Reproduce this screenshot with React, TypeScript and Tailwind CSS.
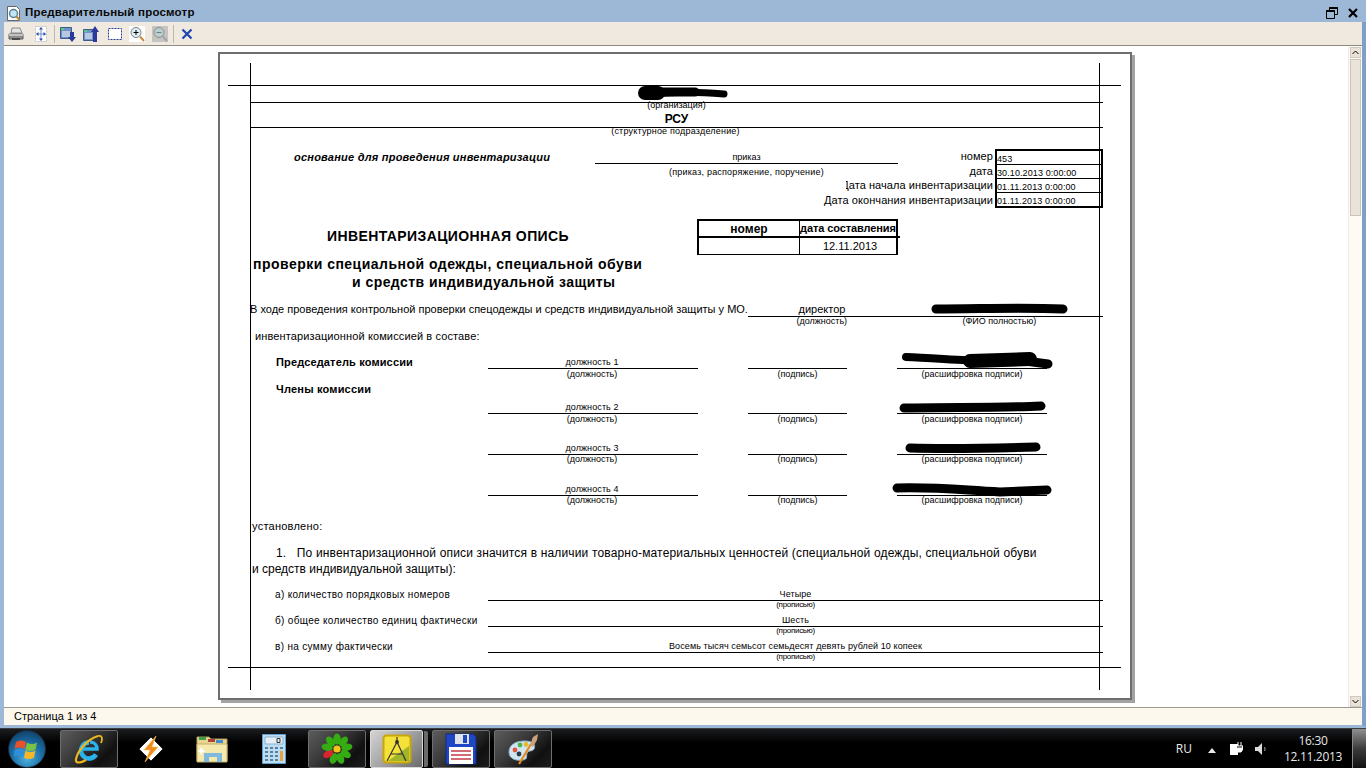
import type { ReactNode } from "react";

function Txt({ className, children }: { className?: string; children: ReactNode }) {
  return <div className={"whitespace-nowrap leading-[12px] " + (className ?? "")}>{children}</div>;
}

// hand-drawn redaction marks over the names
function Scribbles() {
  return (
    <svg className="absolute left-0 top-0 h-[644px] w-[910px]" viewBox="220 54 910 644" fill="none" stroke="#000" strokeLinecap="round">
      <path d="M645 93 L658 93" strokeWidth="14" />
      <path d="M660 92 L695 92" strokeWidth="9" />
      <path d="M655 94 C680 91 700 92 724 94" strokeWidth="7" />
      <path d="M936 309 C980 309 1020 307 1063 309" strokeWidth="9" />
      <path d="M906 357 C930 358 960 360 985 361" strokeWidth="8" />
      <path d="M970 361 L1030 359" strokeWidth="14" />
      <path d="M1025 361 L1048 364" strokeWidth="9" />
      <path d="M904 408 C950 407 1000 408 1041 406" strokeWidth="9" />
      <path d="M910 448 C950 449 1000 448 1036 447" strokeWidth="9" />
      <path d="M897 488 C940 487 960 490 1000 492 L1047 490" strokeWidth="9" />
    </svg>
  );
}

function SignRow({ title, value, capClass, className }: { title?: string; value: string; capClass: string; className?: string }) {
  return (
    <div className={"flex " + (className ?? "")}>
      <div className="w-[238px] pl-[26px]">
        {title && <Txt className="text-[11px] font-bold tracking-[0.15px]">{title}</Txt>}
      </div>
      <div className="w-[210px] pr-[2px] text-center text-[9px]">
        <Txt className="-mr-[2px] h-[13px] border-b border-black pr-[2px] tracking-[0.1px]">{value}</Txt>
        <Txt className={capClass}>(должность)</Txt>
      </div>
      <div className="ml-[50px] w-[99px] text-center text-[9px]">
        <div className="h-[13px] border-b border-black" />
        <Txt className={capClass}>(подпись)</Txt>
      </div>
      <div className="ml-[50px] w-[150px] text-center text-[9px]">
        <div className="h-[13px] border-b border-black" />
        <Txt className={capClass}>(расшифровка подписи)</Txt>
      </div>
    </div>
  );
}

function TotalRow({ label, value, className }: { label: string; value: string; className?: string }) {
  return (
    <div className={"flex " + (className ?? "")}>
      <Txt className="w-[238px] pl-[25px] pt-px text-[10px] tracking-[0.32px]">{label}</Txt>
      <div className="w-[615px] text-center">
        <Txt className="h-[13px] border-b border-black text-[9px] tracking-[0.1px]">{value}</Txt>
        <Txt className="-mt-[2px] text-[8px] tracking-[-0.3px]">(прописью)</Txt>
      </div>
    </div>
  );
}

function HeadInfo() {
  const dates = ["453", "30.10.2013 0:00:00", "01.11.2013 0:00:00", "01.11.2013 0:00:00"];
  return (
    <div className="mt-[12px] flex h-[59px]">
      <div className="w-[345px] pl-[44px] pt-[2px]">
        <Txt className="text-[11px] font-bold italic tracking-[0.23px]">основание для проведения инвентаризации</Txt>
      </div>
      <div className="w-[303px] pt-[2px] text-center text-[9px]">
        <Txt className="border-b border-black">приказ</Txt>
        <Txt className="mt-[2px] tracking-[0.2px]">(приказ, распоряжение, поручение)</Txt>
      </div>
      <div className="flex w-[95px] flex-col items-end pt-px text-[11px] tracking-[0.07px]">
        <Txt>номер</Txt>
        <Txt className="mt-[3px]">дата</Txt>
        <div className="mt-[2px] flex w-[147px] shrink-0 justify-end overflow-hidden">
          <Txt>Дата начала инвентаризации</Txt>
        </div>
        <Txt className="mt-[3px]">Дата окончания инвентаризации</Txt>
      </div>
      <div className="ml-[2px] flex w-[108px] flex-col border-2 border-black text-[9px] tracking-[0.1px]">
        {dates.map((v, i) => (
          <div key={i} className="flex flex-1 items-end border-b border-black leading-[9px] last:border-b-0">
            {v}
          </div>
        ))}
      </div>
    </div>
  );
}

function DocTitle() {
  return (
    <div className="mt-[11px] flex h-[36px]">
      <div className="w-[447px] pl-[77px] pt-[11px]">
        <Txt className="text-[14px] font-bold tracking-[0.4px]">ИНВЕНТАРИЗАЦИОННАЯ ОПИСЬ</Txt>
      </div>
      <div className="grid h-[36px] w-[201px] grid-cols-[101px_100px] grid-rows-[17px_1fr] border-2 border-b border-black">
        <div className="flex items-center justify-center border-b-2 border-r border-black text-[12px] font-bold">номер</div>
        <div className="flex items-center overflow-hidden whitespace-nowrap border-b-2 border-black text-[11px] font-bold tracking-[-0.1px]">дата составления</div>
        <div className="border-r border-black" />
        <div className="flex items-center justify-center text-[11px]">12.11.2013</div>
      </div>
    </div>
  );
}

function ReportPage() {
  return (
    <div className="ml-[214px] mt-[6px] h-[648px] w-[914px] border-2 border-[#6e6e6e] bg-white shadow-[3px_3px_0_#a3a3a3]">
      <div className="relative h-[644px] w-[910px] overflow-hidden text-black">
        {/* crop marks */}
        <div className="absolute left-[30px] top-[9px] h-[627px] w-px bg-black" />
        <div className="absolute left-[879px] top-[9px] h-[627px] w-px bg-black" />
        <div className="absolute left-[8px] top-[31px] h-px w-[893px] bg-black" />
        <div className="absolute left-[8px] top-[613px] h-px w-[893px] bg-black" />

        <div className="ml-[30px] w-[853px]">
          <div className="h-[49px] border-b border-black" />
          <div className="flex h-[25px] flex-col items-center border-b border-black">
            <Txt className="-mt-[4px] text-[9px]">(организация)</Txt>
            <Txt className="mt-[2px] text-[12px] font-bold">РСУ</Txt>
          </div>
          <Txt className="-mt-[3px] pr-[2px] text-center text-[9px] tracking-[0.2px]">(структурное подразделение)</Txt>

          <HeadInfo />
          <DocTitle />

          <Txt className="mt-[3px] pl-[3px] text-[14px] font-bold tracking-[0.48px]">проверки специальной одежды, специальной обуви</Txt>
          <Txt className="mt-[6px] pl-[102px] text-[14px] font-bold tracking-[0.45px]">и средств индивидуальной защиты</Txt>

          <div className="mt-[15px] flex">
            <div className="w-[498px] overflow-hidden">
              <Txt className="text-[11px]">В ходе проведения контрольной проверки спецодежды и средств индивидуальной защиты у МО.</Txt>
            </div>
            <div className="h-[14px] w-[355px] border-b border-black">
              <Txt className="w-[148px] text-center text-[11px]">директор</Txt>
            </div>
          </div>
          <div className="-mt-[2px] ml-[498px] flex text-center text-[9px]">
            <Txt className="w-[148px]">(должность)</Txt>
            <Txt className="w-[208px]">(ФИО полностью)</Txt>
          </div>
          <Txt className="mt-[3px] pl-[5px] text-[11px] tracking-[0.12px]">инвентаризационной комиссией в составе:</Txt>

          <SignRow className="mt-[14px]" title="Председатель комиссии" value="должность 1" capClass="-mt-[1px]" />
          <Txt className="mt-[3px] pl-[26px] text-[11px] font-bold tracking-[0.2px]">Члены комиссии</Txt>
          <SignRow className="mt-[6px]" value="должность 2" capClass="-mt-[1px]" />
          <SignRow className="mt-[17px]" value="должность 3" capClass="-mt-[2px]" />
          <SignRow className="mt-[18px]" value="должность 4" capClass="-mt-[2px]" />

          <Txt className="mt-[14px] pl-[2px] text-[11px] tracking-[0.25px]">установлено:</Txt>
          <Txt className="mt-[15px] pl-[26px] text-[12px] tracking-[0.16px]">1.&nbsp;&nbsp; По инвентаризационной описи значится в наличии товарно-материальных ценностей (специальной одежды, специальной обуви</Txt>
          <Txt className="mt-[4px] pl-[2px] text-[12px]">и средств индивидуальной защиты):</Txt>

          <TotalRow className="mt-[13px]" label="а) количество порядковых номеров" value="Четыре" />
          <TotalRow className="mt-[3px]" label="б) общее количество единиц фактически" value="Шесть" />
          <TotalRow className="mt-[3px]" label="в) на сумму фактически" value="Восемь тысяч семьсот семьдесят девять рублей 10 копеек" />
        </div>

        <Scribbles />
      </div>
    </div>
  );
}

function ToolIcons() {
  return (
    <div className="flex h-[24px] items-center border-b border-[#8f8b80] bg-[#efe9df]">
      <svg width="16" height="16" viewBox="0 0 16 16" className="ml-[4px]">
        <path d="M4 2h8l2 5H3z" fill="#e4e4e4" stroke="#8a8a8a" />
        <path d="M1 8h14v5H1z" fill="#8e8e8e" stroke="#5f5f5f" />
        <path d="M1 8h14v2H1z" fill="#c2c2c2" />
        <path d="M4 12h8v2H4z" fill="#4a4a4a" />
      </svg>
      <svg width="16" height="16" viewBox="0 0 16 16" className="ml-[9px]">
        <path d="M2.500.500h11v15h-11z" fill="#fff" stroke="#c4c4c4" strokeDasharray="2 1" />
        <path d="M8 2v12M3.500 8h9" stroke="#6b8fc9" />
        <path d="M8 1l2 2.500H6zM8 15l-2-2.500h4zM3 8l2.500-2v4zM13 8l-2.500 2V6z" fill="#2f4fa8" />
      </svg>
      <div className="ml-[5px] h-[18px] w-px bg-[#bdb8ac]" />
      <svg width="16" height="16" viewBox="0 0 16 16" className="ml-[5px]">
        <path d="M.500 1.500h11v11H.500z" fill="#6f93c4" stroke="#3d5a8a" />
        <path d="M1 2h3v2H1z" fill="#4fd07a" />
        <path d="M2 6h8M2 8h8M2 10h8" stroke="#fff" />
        <path d="M10 6h4v5h2l-4 5-4-5h2z" fill="#2a3a9a" />
      </svg>
      <svg width="16" height="16" viewBox="0 0 16 16" className="ml-[7px]">
        <path d="M.500 3.500h11v11H.500z" fill="#6f93c4" stroke="#3d5a8a" />
        <path d="M1 4h3v2H1z" fill="#4fd07a" />
        <path d="M2 8h7M2 10h7M2 12h7" stroke="#fff" />
        <path d="M10 16V6H8l4-6 4 6h-2v10z" fill="#2a3a9a" />
      </svg>
      <svg width="16" height="16" viewBox="0 0 16 16" className="ml-[8px]">
        <path d="M1.500 2.500h13v11h-13z" fill="#fff" stroke="#2a3a9a" strokeDasharray="2 1" />
      </svg>
      <div className="ml-[6px] flex h-[16px] w-[16px] items-center justify-center bg-white">
        <svg width="16" height="16" viewBox="0 0 16 16">
          <circle cx="7" cy="6.500" r="5" fill="#dff0f5" stroke="#7d7d7d" />
          <path d="M4.500 6.500h5M7 4v5" stroke="#000" />
          <path d="M11 10.500l4 4.500" stroke="#c98a3a" strokeWidth="2" />
        </svg>
      </div>
      <div className="ml-[7px] flex h-[16px] w-[16px] items-center justify-center bg-[#c4c4c0]">
        <svg width="16" height="16" viewBox="0 0 16 16">
          <circle cx="7" cy="6.500" r="5" fill="#b9cfcf" stroke="#8d8d8d" />
          <path d="M4.500 6.500h5" stroke="#6f7d7d" />
          <path d="M11 10.500l4 4.500" stroke="#a3a3a3" strokeWidth="2" />
        </svg>
      </div>
      <div className="ml-[5px] h-[18px] w-px bg-[#bdb8ac]" />
      <svg width="12" height="12" viewBox="0 0 12 12" className="ml-[7px]">
        <path d="M1.500 1.500l9 9M10.500 1.500l-9 9" stroke="#1f45b0" strokeWidth="2.200" />
      </svg>
    </div>
  );
}

function TitleBar() {
  return (
    <div className="flex h-[22px] items-center bg-[#9db8d6] pl-[2px] pt-[4px]">
      <svg width="16" height="17" viewBox="0 0 16 17" className="ml-[4px]">
        <path d="M1.500 1.500h9l3 3v11h-12z" fill="#fff" stroke="#666" />
        <circle cx="7.500" cy="8.500" r="4" fill="#bfe6f2" stroke="#5a7f8f" strokeWidth="1.400" />
        <path d="M10.500 11.500l3.500 4" stroke="#b98a3a" strokeWidth="2" />
      </svg>
      <span className="ml-[3px] text-[11.5px] font-bold leading-none tracking-[0.2px] text-[#0a0a0a]">Предварительный просмотр</span>
      <div className="flex-1" />
      <svg width="12" height="12" viewBox="0 0 12 12">
        <path d="M3.500 3.500V.500h8v7h-3" fill="none" stroke="#000" />
        <path d="M3.500 1h8" stroke="#000" strokeWidth="2" />
        <path d="M.500 3.500h8v8h-8z" fill="none" stroke="#000" />
        <path d="M.500 4h8" stroke="#000" strokeWidth="2" />
      </svg>
      <svg width="10" height="10" viewBox="0 0 10 10" className="ml-[10px] mr-[8px]">
        <path d="M1 1l8 8M9 1l-8 8" stroke="#000" strokeWidth="2.200" />
      </svg>
    </div>
  );
}

function ScrollBar() {
  return (
    <div className="flex w-[14px] flex-col items-center border-l border-[#efeadf] bg-[#fdfbf3] pt-px">
      <div className="flex h-[11px] w-[11px] items-center justify-center border border-[#cfcabd] bg-[#e9e3d9]">
        <svg width="7" height="5" viewBox="0 0 7 5"><path d="M.500 4l3-3 3 3" fill="none" stroke="#000" /></svg>
      </div>
      <div className="mt-px h-[157px] w-[11px] border border-[#c8c4b8] bg-[#e9e3d9]" />
      <div className="flex-1" />
      <div className="flex h-[11px] w-[11px] items-center justify-center border border-[#cfcabd] bg-[#e9e3d9]">
        <svg width="7" height="5" viewBox="0 0 7 5"><path d="M.500 1l3 3 3-3" fill="none" stroke="#000" /></svg>
      </div>
    </div>
  );
}

function Orb() {
  return (
    <div className="ml-[8px] flex h-[38px] w-[38px] items-center justify-center rounded-full border border-[#1b2b3a] bg-[radial-gradient(circle_at_50%_75%,#4fb4e0_0%,#1c6fa8_45%,#0b2f4f_100%)]">
      <svg width="26" height="24" viewBox="0 0 26 24">
        <path d="M2 5c3-2 6-2 10 0l-1.500 7c-3-2-6-2-10 0z" fill="#e8512a" />
        <path d="M13 5.500c3 2 6 2 10 0l-1.500 7c-3 2-7 2-10 0z" fill="#7cc142" />
        <path d="M.500 13c3-2 6-2 10 0L9 20c-3-2-6-2-10 0z" fill="#2f8fd8" />
        <path d="M11.500 13.500c3 2 6 2 10 0L20 20.500c-3 2-7 2-10 0z" fill="#f6b72a" />
      </svg>
    </div>
  );
}

function Tile({ active, className, children }: { active?: boolean; className: string; children: ReactNode }) {
  return (
    <div
      className={
        "flex h-[38px] items-center justify-center rounded-[2px] border " +
        (active
          ? "border-[#d8d8d8] bg-[linear-gradient(135deg,#d4d4d4_0%,#a8a8a8_45%,#6a6a6a_100%)] "
          : "border-[#6e6e6e] bg-[linear-gradient(135deg,#5c5c5c_0%,#3a3a3a_40%,#101010_75%,#1c1c1c_100%)] ") +
        className
      }
    >
      {children}
    </div>
  );
}

const IeIcon = (
  <svg width="30" height="32" viewBox="0 0 30 32" fill="none">
    <path d="M15 9.500a8 8 0 1 0 7 12" stroke="#2cb2ea" strokeWidth="4.500" />
    <path d="M8 16h15c0-4-3-7-7-7" stroke="#2cb2ea" strokeWidth="3.500" />
    <path d="M24 3C14 6 4 17 2 26c-1 5 5 4 10 1" stroke="#f0b81e" strokeWidth="2.200" />
    <path d="M24 3c4-1 5 2 3 7" stroke="#f0b81e" strokeWidth="1.800" />
  </svg>
);

const WinampIcon = (
  <svg width="28" height="28" viewBox="0 0 28 28">
    <path d="M14 2l12 12-12 12L2 14z" fill="#fff" stroke="#222" />
    <path d="M19 1L7 15h6l-5 12 13-15h-6z" fill="#f08c1e" stroke="#ffc765" strokeWidth="0.600" />
  </svg>
);

const FolderIcon = (
  <svg width="32" height="29" viewBox="0 0 32 29">
    <path d="M1 3h12l2 2h16v22H1z" fill="#e8d690" stroke="#b29a55" />
    <path d="M3 3h7v3H3z" fill="#3f9f4a" />
    <path d="M12 5h7v3h-7z" fill="#b5403a" />
    <path d="M20 6h7v3h-7z" fill="#3f8fd0" />
    <path d="M1 10h30v18H1z" fill="#f6e9ae" stroke="#c4ad6a" />
    <path d="M8 28v-9h18v9h-5v-5h-8v5z" fill="#7fb9de" />
    <path d="M5 13l2 3 3 1-3 1-2 3-1-3-3-1 3-1z" fill="#fff" />
  </svg>
);

const CalcIcon = (
  <svg width="24" height="30" viewBox="0 0 24 30">
    <path d="M.500.500h23v29H.500z" fill="#bcdcf2" stroke="#5f9fcf" />
    <path d="M3 3h18v7H3z" fill="#e4eef6" stroke="#8db0c9" />
    <path d="M15 4.500h3v4h-3z" fill="none" stroke="#333" />
    <path d="M3 13h3v2H3zM8 13h3v2H8zM13 13h3v2h-3zM18 13h3v2h-3zM3 17h3v2H3zM8 17h3v2H8zM13 17h3v2h-3zM3 21h3v2H3zM8 21h3v2H8zM13 21h3v2h-3zM3 25h3v2H3zM8 25h3v2H8zM13 25h3v2h-3z" fill="#5a7f9f" />
    <path d="M18 17h3v10h-3z" fill="#e8a23a" />
  </svg>
);

const petals = [0, 40, 80, 120, 160, 200, 240, 280, 320];

const IcqIcon = (
  <svg width="32" height="32" viewBox="-16 -16 32 32">
    {petals.map((a) => (
      <ellipse key={a} cx="0" cy="-10" rx="3.600" ry="5.600" fill={a === 240 ? "#d9232e" : "#35ad12"} transform={`rotate(${a})`} />
    ))}
    <circle r="3.600" fill="#f5c518" />
  </svg>
);

const CompassIcon = (
  <svg width="30" height="30" viewBox="0 0 30 30">
    <rect x="1.500" y="1.500" width="27" height="27" rx="3" fill="#f4e23a" stroke="#c9a60a" strokeWidth="2" />
    <path d="M6 27L27 12v15z" fill="#9fb52a" />
    <path d="M15 3v6M15 8L5 27M15 8l9 19M9 20h12" stroke="#333" strokeWidth="1.200" fill="none" />
    <circle cx="15" cy="8" r="2" fill="#333" />
  </svg>
);

const FloppyIcon = (
  <svg width="32" height="32" viewBox="0 0 32 32">
    <path d="M1 1h27l3 3v27H1z" fill="#1f46c4" stroke="#122a80" />
    <path d="M10 1h14v10H10z" fill="#dfe3ea" />
    <path d="M18 2h4v8h-4z" fill="#1f46c4" />
    <path d="M4 14h24v17H4z" fill="#fff" />
    <path d="M6 18h20M6 22h20M6 26h20" stroke="#c43a4a" strokeWidth="1.500" />
  </svg>
);

const PaletteIcon = (
  <svg width="32" height="32" viewBox="0 0 32 32">
    <path d="M2 19C2 11 10 8 18 8c8 0 11 4 9 8-2 3-6 1-7 4-1 4 1 6-4 7C9 28 2 26 2 19z" fill="#cfe6f2" stroke="#8fb5cc" />
    <circle cx="8" cy="17" r="2.400" fill="#e2553a" />
    <circle cx="13" cy="12" r="2.400" fill="#4fb44a" />
    <circle cx="19" cy="11.500" r="2.400" fill="#e8b92a" />
    <circle cx="12" cy="21" r="2.400" fill="#2a3a4a" />
    <path d="M12 31L24 11" stroke="#e88a1e" strokeWidth="2.200" />
    <path d="M23 12l3-8 5-3-1 6-4 7z" fill="#c9a27a" />
  </svg>
);

function Taskbar() {
  return (
    <div className="flex h-[40px] items-center border-t border-[#3c3f44] bg-[linear-gradient(180deg,#1a1c1f_0%,#000_35%,#000_100%)] text-white">
      <Orb />
      <Tile className="ml-[14px] w-[58px]">{IeIcon}</Tile>
      <div className="flex w-[66px] justify-center">{WinampIcon}</div>
      <div className="flex w-[56px] justify-center">{FolderIcon}</div>
      <div className="flex w-[68px] justify-center">{CalcIcon}</div>
      <Tile className="w-[58px]">{IcqIcon}</Tile>
      <Tile active className="ml-[4px] w-[53px]">{CompassIcon}</Tile>
      <div className="ml-[1px] h-[36px] w-[4px] rounded-r-[2px] bg-[#6a6a6a]" />
      <Tile className="ml-[4px] w-[58px]">{FloppyIcon}</Tile>
      <Tile className="ml-[4px] w-[58px]">{PaletteIcon}</Tile>
      <div className="flex-1" />
      <span className="mr-[16px] font-['Open_Sans',sans-serif] text-[12px] leading-none text-[#e8e8e8]">RU</span>
      <svg width="8" height="5" viewBox="0 0 8 5" className="mr-[13px] mt-[4px]"><path d="M4 0l4 5H0z" fill="#e8e8e8" /></svg>
      <svg width="14" height="15" viewBox="0 0 14 15" className="mr-[12px]">
        <path d="M1 3h8v11H1z" fill="#fff" />
        <path d="M9 1v4M12 1v4M7 5h7v3l-2 3H9L7 8z" fill="#fff" stroke="#fff" />
        <path d="M8 6h5" stroke="#000" />
      </svg>
      <svg width="12" height="12" viewBox="0 0 12 12" className="mr-[18px]">
        <path d="M0 4h3l4-4v12L3 8H0z" fill="#dcdcdc" />
        <path d="M9.500 4c.7 1 .7 3 0 4" fill="none" stroke="#aaa" />
      </svg>
      <div className="mr-[11px] flex w-[56px] flex-col items-center font-['Open_Sans',sans-serif] text-[12px] leading-[16px] tracking-[-0.3px] text-[#e8e8e8]">
        <span>16:30</span>
        <span>12.11.2013</span>
      </div>
      <div className="h-full w-[14px] border-l border-t border-[#8a8a8a] bg-[linear-gradient(180deg,#8c8c8c_0%,#3a3a3a_50%,#111_100%)]" />
    </div>
  );
}

export default function App() {
  return (
    <div className="flex h-[768px] w-[1366px] flex-col overflow-hidden font-['Liberation_Sans',sans-serif]">
      <div className="flex min-h-0 flex-1 flex-col border-b-[3px] border-l-4 border-r-4 border-[#9db8d6] border-r-[#7f9fc6]">
        <div className="-mx-1">
          <TitleBar />
        </div>
        <ToolIcons />
        <div className="flex min-h-0 flex-1 border-b border-[#9a9a8f] bg-white">
          <div className="min-w-0 flex-1">
            <ReportPage />
          </div>
          <ScrollBar />
        </div>
        <div className="flex h-[17px] items-center bg-[#fdf8ee] pl-[10px] text-[11px] leading-none text-black">
          Страница 1 из 4
        </div>
      </div>
      <Taskbar />
    </div>
  );
}
